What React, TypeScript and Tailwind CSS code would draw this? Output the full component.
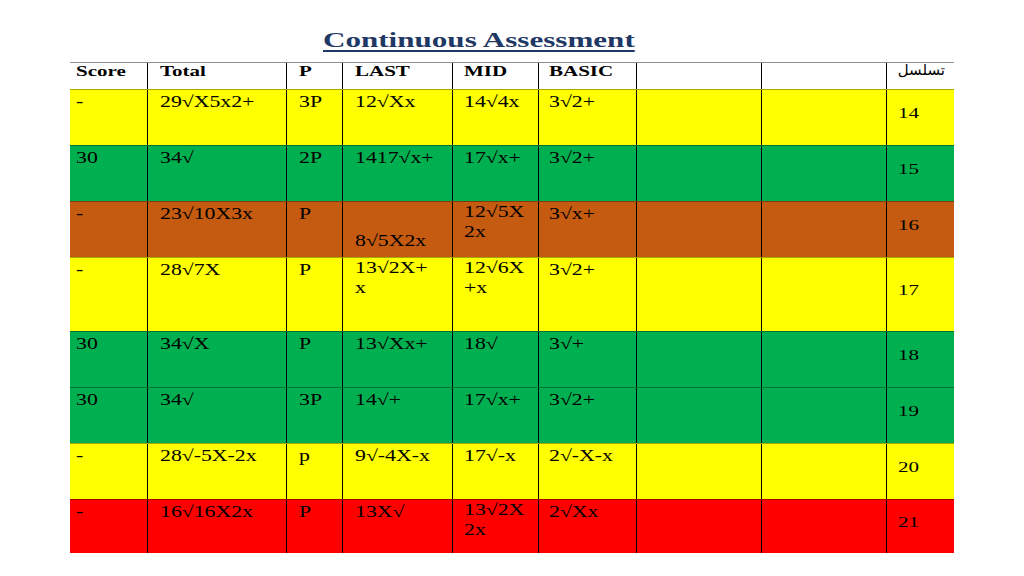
const cols = [
  { w: "w-[78px]", pl: "pl-[6px]" },
  { w: "w-[139px]", pl: "pl-[12px]" },
  { w: "w-[56px]", pl: "pl-[12px]" },
  { w: "w-[110px]", pl: "pl-[12px]" },
  { w: "w-[86px]", pl: "pl-[11px]" },
  { w: "w-[98px]", pl: "pl-[10px]" },
  { w: "w-[125px]", pl: "pl-0" },
  { w: "w-[125px]", pl: "pl-0" },
];

const headers = ["Score", "Total", "P", "LAST", "MID", "BASIC", "", ""];

type Row = {
  n: string;
  bg: string;
  h: string;
  cells: string[];
  lowLast?: boolean;
};

const rows: Row[] = [
  { n: "14", bg: "bg-[#ffff00]", h: "h-[56px]", cells: ["-", "29√X5x2+", "3P", "12√Xx", "14√4x", "3√2+", "", ""] },
  { n: "15", bg: "bg-[#00b050]", h: "h-[56px]", cells: ["30", "34√", "2P", "1417√x+", "17√x+", "3√2+", "", ""] },
  { n: "16", bg: "bg-[#c55a11]", h: "h-[56px]", cells: ["-", "23√10X3x", "P", "8√5X2x", "12√5X\n2x", "3√x+", "", ""], lowLast: true },
  { n: "17", bg: "bg-[#ffff00]", h: "h-[74px]", cells: ["-", "28√7X", "P", "13√2X+\nx", "12√6X\n+x", "3√2+", "", ""] },
  { n: "18", bg: "bg-[#00b050]", h: "h-[56px]", cells: ["30", "34√X", "P", "13√Xx+", "18√", "3√+", "", ""] },
  { n: "19", bg: "bg-[#00b050]", h: "h-[56px]", cells: ["30", "34√", "3P", "14√+", "17√x+", "3√2+", "", ""] },
  { n: "20", bg: "bg-[#ffff00]", h: "h-[56px]", cells: ["-", "28√-5X-2x", "p", "9√-4X-x", "17√-x", "2√-X-x", "", ""] },
  { n: "21", bg: "bg-[#ff0000]", h: "h-[54px]", cells: ["-", "16√16X2x", "P", "13X√", "13√2X\n2x", "2√Xx", "", ""] },
];

const serif = "font-['Liberation_Serif','Times_New_Roman',serif]";

export default function App() {
  return (
    <div className={`h-[576px] w-[1024px] overflow-hidden bg-white text-black ${serif}`}>
      <div className="pl-[323px] pt-[28px]">
        <h1 className="inline-block origin-left scale-x-[1.48] text-[21px] leading-[24px] font-bold text-[#1f3864] underline decoration-[1.5px] underline-offset-[3px]">
          Continuous Assessment
        </h1>
      </div>

      <div className="mt-[8px] ml-[70px] w-[884px]">
        {/* header */}
        <div className="flex h-[27px] border-t border-[#8c8c8c] bg-white">
          {cols.map((c, i) => (
            <div key={i} className={`${c.w} ${c.pl} shrink-0 border-r border-black pt-px text-[15px] leading-[14px]`}>
              <span className="inline-block origin-left scale-x-[1.4] font-bold">{headers[i]}</span>
            </div>
          ))}
          <div className="flex-1 pr-[9px] text-right font-['DejaVu_Sans',sans-serif] text-[15px] leading-[15px]">
            تسلسل
          </div>
        </div>

        {rows.map((r) => (
          <div key={r.n} className={`flex ${r.h} ${r.bg} border-t border-black/35`}>
            {cols.map((c, i) => (
              <div
                key={i}
                className={`${c.w} ${c.pl} shrink-0 border-r border-black ${
                  r.lowLast && i === 3 ? "pt-[27px]" : ""
                }`}
              >
                <span className="inline-block origin-left scale-x-[1.36] whitespace-pre-line text-[16px] leading-[20px]">
                  {r.cells[i]}
                </span>
              </div>
            ))}
            <div className="flex flex-1 items-center pb-[10px] pl-[11px]">
              <span className="inline-block origin-left scale-x-[1.4] text-[15px] leading-[18px]">{r.n}</span>
            </div>
          </div>
        ))}
      </div>
    </div>
  );
}
